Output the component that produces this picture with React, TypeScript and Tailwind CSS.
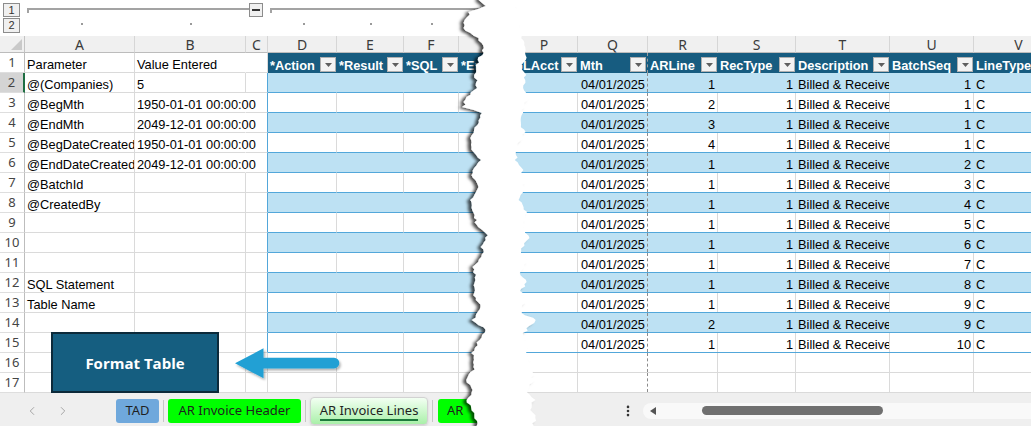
import { ChevronLeft, ChevronRight, EllipsisVertical } from 'lucide-react';

type Pt = [number, number];

// torn paper edges, x relative to the overlay's left (440px)
const LEFT_EDGE: Pt[] = [
  [40, -6], [40, 0], [46, 6], [30, 12], [25, 20], [23, 28], [38, 38], [45, 48], [38, 60], [35, 75],
  [37, 88], [27, 97], [23, 107], [42, 113], [37, 125], [32, 138], [30, 147], [40, 160], [32, 173],
  [37, 187], [32, 200], [33, 213], [38, 227], [47, 233], [42, 247], [43, 257], [32, 267], [37, 280],
  [33, 293], [42, 307], [33, 320], [47, 330], [40, 340], [32, 353], [35, 367], [27, 380], [33, 390],
  [27, 400], [33, 413], [37, 426], [37, 432],
];
const RIGHT_EDGE: Pt[] = [
  [75, -6], [75, 0], [78, 20], [80, 36], [86, 45], [87, 55], [82, 65], [85, 75], [84, 88], [88, 98],
  [82, 110], [80, 120], [84, 132], [78, 145], [76, 160], [82, 170], [84, 185], [80, 200], [86, 212],
  [84, 225], [88, 238], [80, 251], [86, 262], [80, 273], [88, 282], [80, 291], [86, 300], [80, 313],
  [97, 320], [90, 326], [84, 333], [86, 345], [88, 356], [93, 372], [93, 380], [88, 392], [94, 400],
  [90, 410], [96, 418], [93, 426], [93, 432],
];

function roughen(base: Pt[], amp: number, seed: number): Pt[] {
  let s = seed;
  const rnd = () => {
    s = (s * 9301 + 49297) % 233280;
    return s / 233280;
  };
  const out: Pt[] = [];
  for (let i = 0; i < base.length - 1; i++) {
    const [x0, y0] = base[i];
    const [x1, y1] = base[i + 1];
    const n = Math.max(1, Math.round((y1 - y0) / 2.5));
    for (let k = 0; k < n; k++) {
      const t = k / n;
      out.push([x0 + (x1 - x0) * t + (rnd() - 0.5) * amp, y0 + (y1 - y0) * t]);
    }
  }
  out.push(base[base.length - 1]);
  return out;
}

function Tear() {
  const left = roughen(LEFT_EDGE, 3.5, 7);
  const right = roughen(RIGHT_EDGE, 3.5, 19).reverse();
  const pts = [...left, ...right].map(([x, y]) => `${x.toFixed(1)},${y.toFixed(1)}`).join(' ');
  return (
    <svg className="absolute left-[440px] top-0 pointer-events-none" width="120" height="426" viewBox="0 0 120 426">
      <defs>
        <filter id="tearShadow" x="-30%" y="-5%" width="160%" height="110%">
          <feDropShadow dx="-3.5" dy="1" stdDeviation="1.8" floodColor="#000" floodOpacity="0.7" />
        </filter>
      </defs>
      <polygon points={pts} fill="#fff" filter="url(#tearShadow)" />
    </svg>
  );
}

function Arrow() {
  return (
    <svg className="absolute left-[228px] top-[343px] pointer-events-none" width="120" height="42" viewBox="228 343 120 42">
      <defs>
        <filter id="arrowShadow" x="-10%" y="-30%" width="120%" height="160%">
          <feDropShadow dx="1.5" dy="2" stdDeviation="1.2" floodColor="#000" floodOpacity="0.3" />
        </filter>
      </defs>
      <path
        d="M235 363.3 L263.5 348.3 L263.5 357.8 L334 357.8 A5.3 5.3 0 0 1 334 368.4 L263.5 368.4 L263.5 378.3 Z"
        fill="#24a0d4"
        filter="url(#arrowShadow)"
      />
    </svg>
  );
}

function Drop() {
  return (
    <span className="shrink-0 self-start mt-[4px] mr-[1px] w-[16px] h-[15px] bg-[#f3f3f3] border border-[#b0b0b0] flex items-center justify-center">
      <svg width="7" height="4" viewBox="0 0 7 4">
        <path d="M0 0h7L3.5 4z" fill="#5f5f5f" />
      </svg>
    </span>
  );
}

function HeadCell({ w, label, extra = '' }: { w: string; label: string; extra?: string }) {
  return (
    <div className={`${w} shrink-0 flex bg-[#175c80] ${extra}`}>
      <span className="flex-1 min-w-0 overflow-hidden whitespace-nowrap pl-[2px] pt-[5px] leading-[15px] font-bold text-white text-[12.8px]">
        {label}
      </span>
      <Drop />
    </div>
  );
}

const TXT = 'whitespace-nowrap px-[2px] pt-[4px] leading-[15px] text-[12.8px] text-black';

const LEFT_W = ['w-[110px]', 'w-[111px]', 'w-[22px]', 'w-[69px]', 'w-[67px]', 'w-[55px]', 'w-[71px]'];
const LEFT_HEAD = ['*Action', '*Result', '*SQL', '*Error'];
const PARAMS: Record<number, [string, string]> = {
  1: ['Parameter', 'Value Entered'],
  2: ['@(Companies)', '5'],
  3: ['@BegMth', '1950-01-01 00:00:00'],
  4: ['@EndMth', '2049-12-01 00:00:00'],
  5: ['@BegDateCreated', '1950-01-01 00:00:00'],
  6: ['@EndDateCreated', '2049-12-01 00:00:00'],
  7: ['@BatchId', ''],
  8: ['@CreatedBy', ''],
  12: ['SQL Statement', ''],
  13: ['Table Name', ''],
};

// column O sits under the tear, so it carries no text
const RIGHT_COLS = [
  { l: 'O', w: 'w-[21px]', h: '' },
  { l: 'P', w: 'w-[67px]', h: 'GLAcct' },
  { l: 'Q', w: 'w-[70px]', h: 'Mth' },
  { l: 'R', w: 'w-[70px]', h: 'ARLine' },
  { l: 'S', w: 'w-[78px]', h: 'RecType' },
  { l: 'T', w: 'w-[94px]', h: 'Description' },
  { l: 'U', w: 'w-[84px]', h: 'BatchSeq' },
  { l: 'V', w: 'w-[90px]', h: 'LineType' },
];

// ARLine, BatchSeq for rows 2..15
const LINES: [number, number][] = [
  [1, 1], [2, 1], [3, 1], [4, 1], [1, 2], [1, 3], [1, 4],
  [1, 5], [1, 6], [1, 7], [1, 8], [1, 9], [2, 9], [1, 10],
];

const ROWS = Array.from({ length: 17 }, (_, i) => i + 1);

function OutlineBar() {
  const box = 'w-[17px] bg-[#f0f0f0] border border-[#8c8c8c] flex items-center justify-center text-[11px] leading-none text-[#333]';
  return (
    <div className="h-[36px] shrink-0 flex">
      <div className="w-[25px] shrink-0 flex flex-col gap-[1px] pt-[3px] pl-[3px]">
        <div className={`${box} h-[14px]`}>1</div>
        <div className={`${box} h-[15px]`}>2</div>
      </div>
      <div className="flex-1 flex flex-col">
        <div className="h-[18px] flex items-start pt-[3px]">
          <div className="ml-[2px] mt-[5px] w-[222px] h-[5px] border-t-2 border-l-2 border-[#a3a3a3]" />
          <div className="w-[14px] h-[14px] bg-[#f0f0f0] border border-[#8c8c8c] flex items-center justify-center">
            <div className="w-[8px] h-[2px] bg-[#333]" />
          </div>
          <div className="ml-[7px] mt-[5px] flex-1 h-[5px] border-t-2 border-l-2 border-[#a3a3a3]" />
        </div>
        <div className="flex items-start pt-[5px]">
          <div className="ml-[56px] w-[2px] h-[2px] bg-[#9a9a9a]" />
          <div className="ml-[107px] w-[2px] h-[2px] bg-[#9a9a9a]" />
          <div className="ml-[111px] w-[2px] h-[2px] bg-[#9a9a9a]" />
          <div className="ml-[65px] w-[2px] h-[2px] bg-[#9a9a9a]" />
          <div className="ml-[59px] w-[2px] h-[2px] bg-[#9a9a9a]" />
        </div>
      </div>
    </div>
  );
}

const COLHEAD = "shrink-0 bg-[#f0f0f0] border-r border-b border-r-[#d6d6d6] border-b-[#bcbcbc] flex items-center justify-center text-[14px] text-[#3b3b3b] font-['Noto_Sans',sans-serif]";

function LeftSheet() {
  return (
    <div className="w-[490px] shrink-0 flex flex-col overflow-hidden">
      <OutlineBar />
      <div className="h-[17px] shrink-0 flex">
        <div className="w-[25px] shrink-0 bg-[#f0f0f0] border-r border-b border-r-[#c4c4c4] border-b-[#bcbcbc] flex items-end justify-end pr-[2px] pb-[2px]">
          <svg width="11" height="11" viewBox="0 0 11 11">
            <path d="M11 0V11H0z" fill="#c9c9c9" />
          </svg>
        </div>
        {['A', 'B', 'C', 'D', 'E', 'F', 'G'].map((l, i) => (
          <div key={l} className={`${LEFT_W[i]} ${COLHEAD}`}>{l === 'G' ? '' : l}</div>
        ))}
      </div>
      {ROWS.map((r) => {
        const inTable = r >= 2 && r <= 15;
        const band = inTable && r % 2 === 0;
        const p = PARAMS[r] ?? ['', ''];
        const spills = p[1].length > 12;
        return (
          <div key={r} className="h-[20px] shrink-0 flex">
            <div
              className={`w-[25px] shrink-0 border-b border-b-[#dedede] flex items-center justify-center text-[13px] text-[#444] font-['Noto_Sans',sans-serif] ${
                r === 2 ? 'bg-[#d4d4d4] border-r-2 border-r-[#1e6e42]' : 'bg-white border-r border-r-[#bdbdbd]'
              }`}
            >
              {r}
            </div>
            <div className={`${LEFT_W[0]} shrink-0 overflow-hidden border-r border-b border-[#dadada] ${TXT}`}>{p[0]}</div>
            <div
              className={`${LEFT_W[1]} shrink-0 border-r border-b border-b-[#dadada] ${
                spills ? 'border-r-transparent' : 'border-r-[#dadada]'
              } ${TXT}`}
            >
              {p[1]}
            </div>
            <div
              className={`${LEFT_W[2]} shrink-0 border-r border-b border-b-[#dadada] ${
                inTable ? 'border-r-[#52a7da]' : 'border-r-[#dadada]'
              }`}
            />
            {[3, 4, 5, 6].map((c, k) =>
              r === 1 ? (
                <HeadCell key={c} w={LEFT_W[c]} label={LEFT_HEAD[k]} />
              ) : inTable ? (
                <div
                  key={c}
                  className={`${LEFT_W[c]} shrink-0 border-r border-b border-b-[#52a7da] ${
                    band ? 'bg-[#bde1f3] border-r-[#bde1f3]' : 'bg-white border-r-[#dadada]'
                  }`}
                />
              ) : (
                <div key={c} className={`${LEFT_W[c]} shrink-0 border-r border-b border-[#dadada]`} />
              )
            )}
          </div>
        );
      })}
      <div className="h-[33px] shrink-0 bg-[#efefef] flex items-center pt-[2px] font-['Noto_Sans',sans-serif] text-[13px] text-[#1f1f1f]">
        <div className="w-[116px] shrink-0 flex items-center pl-[25px] gap-[17px] text-[#9a9a9a]">
          <ChevronLeft size={14} strokeWidth={1.5} />
          <ChevronRight size={14} strokeWidth={1.5} />
        </div>
        <div className="w-[43px] h-[24px] shrink-0 rounded-[3px] bg-[#6fa8dc] flex items-center justify-center">TAD</div>
        <div className="w-px h-[22px] mx-[4px] shrink-0 bg-[#c6c6c6]" />
        <div className="w-[133px] h-[24px] shrink-0 rounded-[3px] bg-[#00ff00] flex items-center justify-center">
          AR Invoice Header
        </div>
        <div className="w-px h-[22px] mx-[4px] shrink-0 bg-[#c6c6c6]" />
        <div className="w-[118px] h-[28px] shrink-0 rounded-[4px] border border-[#d2d2d2] bg-gradient-to-b from-[#f2fff2] to-[#a9f0a9] shadow-sm flex items-center justify-center">
          <span className="leading-[17px] border-b-2 border-[#1d7a3c] pt-[1px]">AR Invoice Lines</span>
        </div>
        <div className="w-px h-[22px] ml-[4px] mr-[5px] shrink-0 bg-[#c6c6c6]" />
        <div className="w-[60px] h-[24px] shrink-0 rounded-l-[3px] bg-[#00ff00] pl-[9px] flex items-center">AR</div>
      </div>
    </div>
  );
}

function RightSheet() {
  return (
    <div className="flex-1 min-w-0 flex flex-col overflow-hidden">
      <div className="h-[36px] shrink-0" />
      <div className="h-[17px] shrink-0 flex">
        {RIGHT_COLS.map((c) => (
          <div key={c.l} className={`${c.w} ${COLHEAD}`}>{c.l === 'O' ? '' : c.l}</div>
        ))}
      </div>
      {ROWS.map((r) => {
        const inTable = r >= 2 && r <= 15;
        const band = inTable && r % 2 === 0;
        if (r === 1) {
          return (
            <div key={r} className="h-[20px] shrink-0 flex bg-[#175c80]">
              {RIGHT_COLS.map((c) => (
                <HeadCell
                  key={c.l}
                  w={c.w}
                  label={c.h}
                  extra={c.l === 'Q' ? 'border-r border-dashed border-[#9a9a9a]' : ''}
                />
              ))}
            </div>
          );
        }
        const line = inTable ? LINES[r - 2] : null;
        const vals: Record<string, string> = line
          ? { Q: '04/01/2025', R: String(line[0]), S: '1', T: 'Billed & Received', U: String(line[1]), V: 'C' }
          : {};
        const right = ['Q', 'R', 'S', 'U'];
        return (
          <div
            key={r}
            className={`h-[20px] shrink-0 flex border-b ${
              inTable ? 'border-[#52a7da]' : 'border-[#dadada]'
            } ${band ? 'bg-[#bde1f3]' : 'bg-white'}`}
          >
            {RIGHT_COLS.map((c) => (
              <div
                key={c.l}
                className={`${c.w} shrink-0 overflow-hidden border-r ${
                  c.l === 'Q' ? 'border-dashed border-[#8c8c8c]' : band ? 'border-transparent' : 'border-[#dadada]'
                } ${TXT} ${right.includes(c.l) ? 'text-right' : ''}`}
              >
                {vals[c.l] ?? ''}
              </div>
            ))}
          </div>
        );
      })}
      <div className="h-[33px] shrink-0 bg-[#efefef] flex items-center pt-[2px]">
        <div className="ml-[130px] w-[16px] shrink-0 flex justify-center text-[#333]">
          <EllipsisVertical size={14} strokeWidth={2.5} />
        </div>
        <div className="ml-[7px] flex-1 h-[16px] rounded-l-full bg-[#f9f9f9] flex items-center pl-[7px]">
          <svg width="6" height="8" viewBox="0 0 6 8">
            <path d="M6 0v8L0 4z" fill="#555" />
          </svg>
          <div className="ml-[46px] w-[181px] h-[9px] shrink-0 rounded-full bg-[#707070]" />
        </div>
      </div>
    </div>
  );
}

export default function App() {
  return (
    <div className="relative w-[1031px] h-[426px] overflow-hidden bg-white flex font-['Liberation_Sans',Arial,sans-serif]">
      <LeftSheet />
      <RightSheet />
      <div className="absolute left-[51px] top-[332px] w-[168px] h-[61px] bg-[#155e80] border-2 border-[#0c2a3a] flex items-center justify-center pt-[2px] text-white font-bold text-[15px] font-['Open_Sans',sans-serif]">
        Format Table
      </div>
      <Arrow />
      <Tear />
    </div>
  );
}
